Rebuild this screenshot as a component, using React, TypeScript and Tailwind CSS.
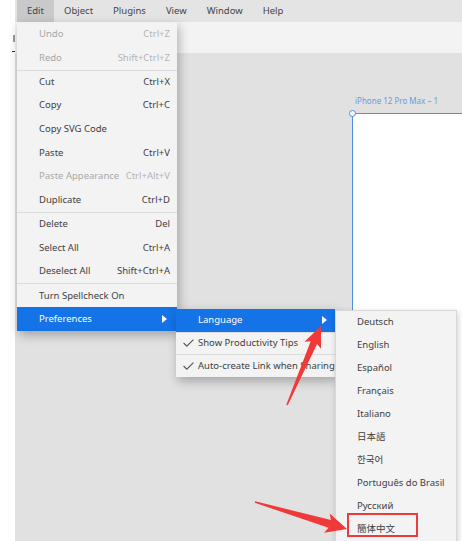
import React from "react";

const F = "font-['Noto_Sans','Noto_Sans_CJK_SC',sans-serif]";

type Item = { label: string; sc?: string; disabled?: boolean; sep?: boolean; active?: boolean; sub?: boolean };

const editItems: Item[] = [
  { label: "Undo", sc: "Ctrl+Z", disabled: true },
  { label: "Redo", sc: "Shift+Ctrl+Z", disabled: true },
  { label: "Cut", sc: "Ctrl+X", sep: true },
  { label: "Copy", sc: "Ctrl+C" },
  { label: "Copy SVG Code" },
  { label: "Paste", sc: "Ctrl+V" },
  { label: "Paste Appearance", sc: "Ctrl+Alt+V", disabled: true },
  { label: "Duplicate", sc: "Ctrl+D" },
  { label: "Delete", sc: "Del", sep: true },
  { label: "Select All", sc: "Ctrl+A" },
  { label: "Deselect All", sc: "Shift+Ctrl+A" },
  { label: "Turn Spellcheck On", sep: true },
  { label: "Preferences", active: true, sub: true },
];

const langs = ["Deutsch", "English", "Español", "Français", "Italiano", "日本語", "한국어", "Português do Brasil", "Русский", "簡体中文"];

function arrowPoints(tx: number, ty: number, px: number, py: number, L: number, H: number, N: number) {
  const dx = px - tx, dy = py - ty;
  const len = Math.hypot(dx, dy);
  const ux = dx / len, uy = dy / len;
  const nx = -uy, ny = ux;
  const bx = px - ux * L, by = py - uy * L;
  const cx = bx - ux * 3, cy = by - uy * 3;
  const pts = [
    [tx + nx * 0.8, ty + ny * 0.8],
    [bx + nx * N, by + ny * N],
    [cx + nx * H, cy + ny * H],
    [px, py],
    [cx - nx * H, cy - ny * H],
    [bx - nx * N, by - ny * N],
    [tx - nx * 0.8, ty - ny * 0.8],
  ];
  return pts.map((p) => p.map((v) => v.toFixed(1)).join(",")).join(" ");
}

function Tri() {
  return (
    <svg width="5" height="8" viewBox="0 0 5 8">
      <path d="M0 0 L5 4 L0 8 Z" fill="#ffffff" />
    </svg>
  );
}

function Check() {
  return (
    <svg width="11" height="8" viewBox="0 0 11 8">
      <path d="M0.6 4 L3.8 7.2 L10.4 0.6" fill="none" stroke="#555" strokeWidth="1.1" />
    </svg>
  );
}

export default function App() {
  return (
    <div className={`relative w-[462px] h-[541px] overflow-hidden flex bg-white ${F}`}>
      {/* left strip */}
      <div className="w-[15px] h-full bg-white flex flex-col items-end">
        <div className="mt-[35px] w-[2px] h-[7px] bg-[#9a9a9a]" />
        <div className="mt-[9px] w-[3px] h-[1px] bg-[#333]" />
      </div>

      {/* main app */}
      <div className="flex-1 flex flex-col h-full">
        <div className="h-[22px] bg-[#e4e4e4] flex items-stretch text-[9.5px] text-[#444]">
          <div className="ml-[2px] px-[10px] flex items-center bg-[#c9c9c9]">Edit</div>
          <div className="px-[10px] flex items-center">Object</div>
          <div className="px-[10px] flex items-center">Plugins</div>
          <div className="px-[10px] flex items-center">View</div>
          <div className="px-[10px] flex items-center">Window</div>
          <div className="px-[10px] flex items-center">Help</div>
        </div>
        <div className="h-[31px] bg-[#f3f3f3]" />
        <div className="flex-1 relative bg-[#e1e1e1]">
          {/* artboard */}
          <div className="absolute left-[340px] top-[44px] text-[8px] text-[#6b9ae0] whitespace-nowrap leading-none">
            iPhone 12 Pro Max – 1
          </div>
          <div className="absolute left-[337px] top-[60px] w-[140px] h-[520px] bg-white border border-[#4a8ee6]" />
          <div className="absolute left-[333.5px] top-[56.5px] w-[7px] h-[7px] rounded-full bg-white border border-[#4a8ee6]" />
        </div>
      </div>

      {/* Edit menu */}
      <div className="absolute left-[17px] top-[22px] w-[160px] bg-[#f3f3f3] shadow-[2px_4px_10px_rgba(0,0,0,0.28)] text-[9.5px]">
        {editItems.map((it) => (
          <div
            key={it.label}
            className={`h-[23.75px] flex items-center justify-between pl-[22px] ${it.sub ? "pr-[10px]" : "pr-[7px]"} ${
              it.sep ? "border-t border-[#dcdcdc]" : ""
            } ${it.active ? "bg-[#1473e6] text-white" : it.disabled ? "text-[#a8a8a8]" : "text-[#404040]"}`}
          >
            <span>{it.label}</span>
            {it.sc && <span className={it.disabled ? "text-[#b4b4b4]" : "text-[#404040]"}>{it.sc}</span>}
            {it.sub && <Tri />}
          </div>
        ))}
      </div>

      {/* Preferences submenu */}
      <div className="absolute left-[176px] top-[309px] w-[159px] bg-[#f3f3f3] shadow-[2px_4px_10px_rgba(0,0,0,0.28)] text-[9.5px] text-[#404040]">
        <div className="h-[22.5px] flex items-center justify-between pl-[22px] pr-[8px] bg-[#1473e6] text-white">
          <span>Language</span>
          <Tri />
        </div>
        <div className="h-[22.5px] flex items-center pl-[7px] border-t border-[#dcdcdc] gap-[4px]">
          <Check />
          <span>Show Productivity Tips</span>
        </div>
        <div className="h-[22.5px] flex items-center pl-[7px] border-t border-[#dcdcdc] gap-[4px] whitespace-nowrap">
          <Check />
          <span>Auto-create Link when Sharing</span>
        </div>
      </div>

      {/* Language list */}
      <div className="absolute left-[335px] top-[310px] w-[122px] bg-[#f3f3f3] border border-[#d8d8d8] shadow-[1px_2px_6px_rgba(0,0,0,0.2)] text-[9.5px] text-[#404040]">
        {langs.map((l) => (
          <div key={l} className="h-[23px] flex items-center pl-[21px] whitespace-nowrap">
            {l}
          </div>
        ))}
      </div>

      {/* red highlight box */}
      <div className="absolute left-[347px] top-[513px] w-[71px] h-[24px] border-[2.5px] border-[#f03a3a]" />

      {/* arrows */}
      <svg className="absolute left-0 top-0 pointer-events-none" width="462" height="541">
        <polygon points={arrowPoints(287, 405, 321, 326, 18, 9, 3.5)} fill="#f03a3a" />
        <polygon points={arrowPoints(255, 502, 347, 529, 18, 10, 4)} fill="#f03a3a" />
      </svg>
    </div>
  );
}
